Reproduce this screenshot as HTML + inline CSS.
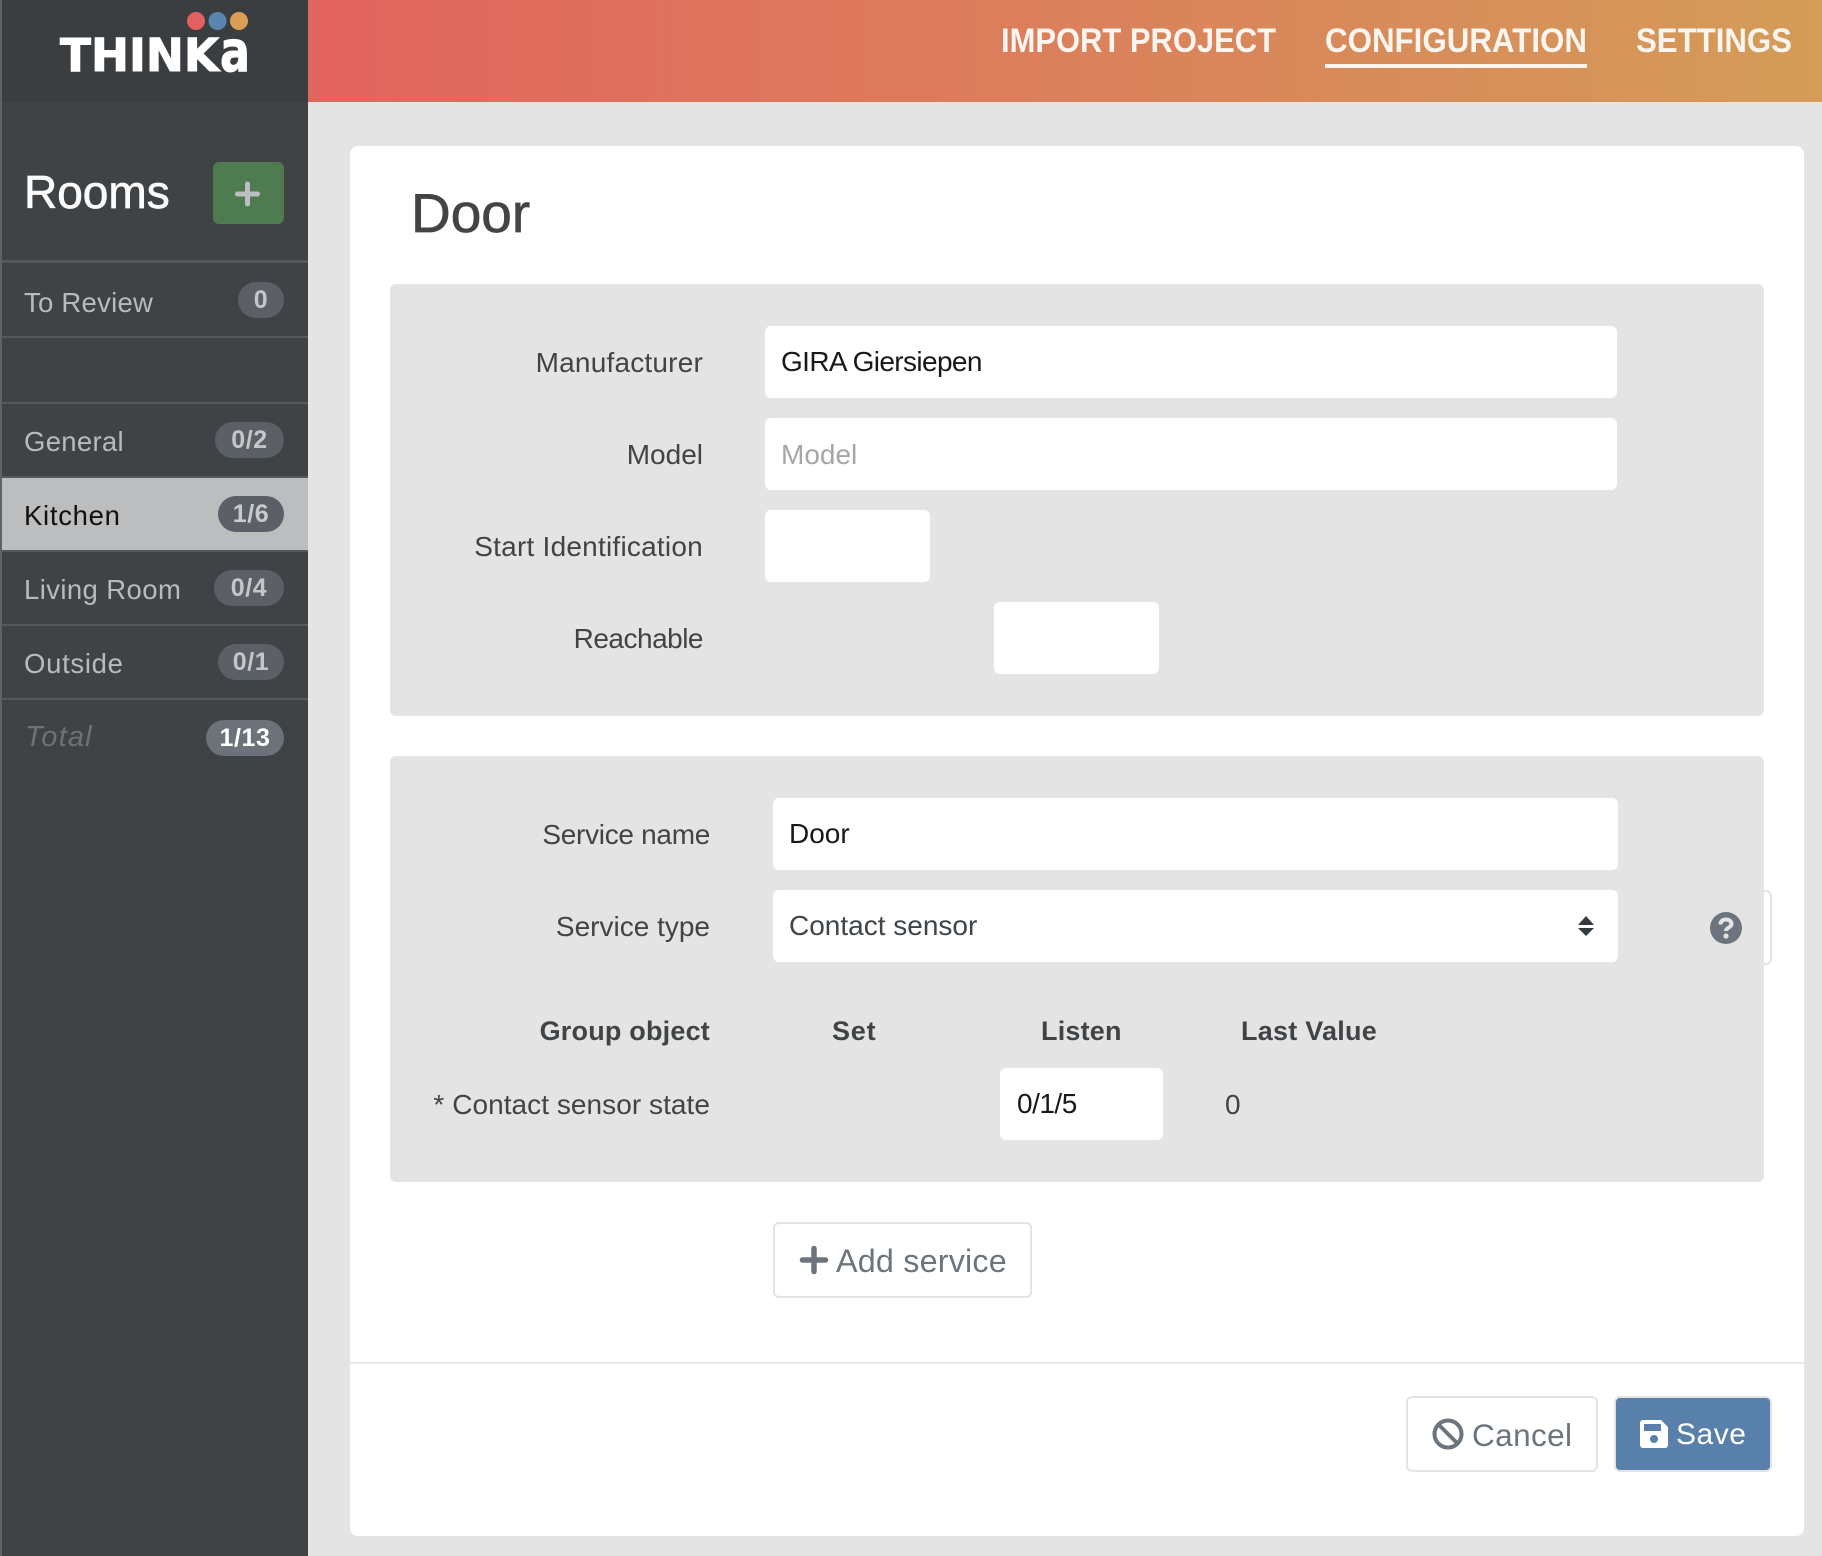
<!DOCTYPE html>
<html lang="en"><head><meta charset="utf-8"><title>Thinka</title>
<style>
html,body{margin:0;padding:0;width:1822px;height:1556px;overflow:hidden;background:#e4e4e4;font-family:"Liberation Sans",Arial,sans-serif}
.a{position:absolute}
.t{position:absolute;line-height:0;white-space:nowrap;font-size:28px;color:#414446}
.r{text-align:right;width:400px;left:310px}
.i{position:absolute;background:#fff;border-radius:6px;height:72px}
.side{color:#b9babb;left:24px;font-size:27.5px}
.b{position:absolute;height:36px;border-radius:18px;background:#5b6067;color:#c4c6c8;font-weight:bold;font-size:25px;line-height:36px;text-align:center;letter-spacing:.6px}
.hr{position:absolute;left:2px;width:306px;height:2px;background:#55585c}
.th{font-weight:bold;font-size:27px}
</style></head><body>
<!-- sidebar -->
<div class="a" style="left:0;top:0;width:308px;height:1556px;background:#3f4346"></div>
<div class="a" style="left:0;top:0;width:308px;height:102px;background:#3a3e41"></div>
<div class="a" style="left:0;top:0;width:2px;height:1556px;background:#5f6366"></div>
<!-- header -->
<div class="a" style="left:308px;top:0;width:1514px;height:102px;background:linear-gradient(90deg,#e2645f 0%,#d49c58 100%)"></div>
<svg class="a" style="left:0;top:0" width="1822" height="102">
<circle cx="196" cy="21" r="9" fill="#e26160"/><circle cx="217.500" cy="21" r="9" fill="#5a85b0"/><circle cx="239" cy="21" r="9" fill="#dc9e55"/>
<text x="60" y="71" font-family="DejaVu Sans" font-weight="bold" font-size="45" fill="#fff" stroke="#fff" stroke-width="1" textLength="159" lengthAdjust="spacingAndGlyphs">THINK</text>
<text x="220" y="71" font-family="DejaVu Sans" font-weight="bold" font-size="57" fill="#fff" stroke="#fff" stroke-width="1" textLength="30" lengthAdjust="spacingAndGlyphs">a</text>
<g font-family="Liberation Sans" font-weight="bold" font-size="34.500" fill="#fbf5f0">
<text x="1001" y="52" textLength="275" lengthAdjust="spacingAndGlyphs">IMPORT PROJECT</text>
<text x="1325" y="52" textLength="262" lengthAdjust="spacingAndGlyphs">CONFIGURATION</text>
<text x="1636" y="52" textLength="156" lengthAdjust="spacingAndGlyphs">SETTINGS</text>
</g>
<rect x="1325" y="64" width="262" height="4" fill="#fbf5f0"/>
</svg>
<!-- sidebar content -->
<div class="t" style="left:24px;top:192px;font-size:46px;color:#fbfbfb;-webkit-text-stroke:.7px #fbfbfb">Rooms</div>
<div class="a" style="left:213px;top:162px;width:71px;height:62px;border-radius:6px;background:#4e7b4f"></div>
<svg class="a" style="left:213px;top:162px" width="71" height="62"><path d="M24.500 32H44.500M34.500 22V42" stroke="#bcbfc1" stroke-width="5" stroke-linecap="round" fill="none"/></svg>
<div class="hr" style="top:260px;height:3px"></div>
<div class="hr" style="top:336px"></div>
<div class="hr" style="top:402px"></div>
<div class="hr" style="top:476px"></div>
<div class="a" style="left:2px;top:478px;width:306px;height:72px;background:#bcbdbf"></div>
<div class="hr" style="top:550px"></div>
<div class="hr" style="top:624px"></div>
<div class="hr" style="top:698px"></div>
<div class="t side" style="top:302.500px;letter-spacing:.25px">To Review</div>
<div class="b" style="left:238px;top:282px;width:46px">0</div>
<div class="t side" style="top:442px;letter-spacing:.3px">General</div>
<div class="b" style="left:215px;top:422px;width:69px">0/2</div>
<div class="t side" style="top:516px;color:#111;letter-spacing:.7px">Kitchen</div>
<div class="b" style="left:218px;top:496px;width:66px;color:#c8cacc">1/6</div>
<div class="t side" style="top:590px;letter-spacing:.4px">Living Room</div>
<div class="b" style="left:214px;top:570px;width:70px">0/4</div>
<div class="t side" style="top:664px;letter-spacing:.7px">Outside</div>
<div class="b" style="left:218px;top:644px;width:66px">0/1</div>
<div class="t side" style="top:737px;color:#6c7278;font-style:italic;font-size:29px;letter-spacing:1.200px;left:25px">Total</div>
<div class="b" style="left:206px;top:720px;width:78px;background:#6b7279;color:#fff;line-height:37px">1/13</div>
<!-- card -->
<div class="a" style="left:350px;top:146px;width:1454px;height:1390px;background:#fff;border-radius:8px"></div>
<div class="t" style="left:411px;top:213px;font-size:55px;color:#444;-webkit-text-stroke:.7px #444">Door</div>
<!-- panel 1 -->
<div class="a" style="left:390px;top:284px;width:1374px;height:432px;background:#e4e4e4;border-radius:6px"></div>
<div class="t r" style="left:303px;top:363px;letter-spacing:.2px">Manufacturer</div>
<div class="t r" style="left:303px;top:455px">Model</div>
<div class="t r" style="left:303px;top:547px;letter-spacing:.23px">Start Identification</div>
<div class="t r" style="left:303px;top:639px;letter-spacing:-.5px">Reachable</div>
<div class="i" style="left:765px;top:326px;width:852px"></div>
<div class="t" style="left:781px;top:362px;color:#16181a;letter-spacing:-.62px">GIRA Giersiepen</div>
<div class="i" style="left:765px;top:418px;width:852px"></div>
<div class="t" style="left:781px;top:455px;color:#a6a6a6">Model</div>
<div class="i" style="left:765px;top:510px;width:165px"></div>
<div class="i" style="left:994px;top:602px;width:165px"></div>
<!-- panel 2 -->
<div class="a" style="left:1760px;top:890px;width:8px;height:71px;border:2px solid #e4e4e4;border-radius:0 6px 6px 0"></div>
<div class="a" style="left:390px;top:756px;width:1374px;height:426px;background:#e4e4e4;border-radius:6px"></div>
<div class="t r" style="top:835px;letter-spacing:-.3px">Service name</div>
<div class="t r" style="top:927px">Service type</div>
<div class="i" style="left:773px;top:798px;width:845px"></div>
<div class="t" style="left:789px;top:834px;color:#16181a">Door</div>
<div class="i" style="left:773px;top:890px;width:845px"></div>
<div class="t" style="left:789px;top:926px;color:#3f4448">Contact sensor</div>
<svg class="a" style="left:1570px;top:910px" width="32" height="32"><path d="M16 6L24 15H8ZM16 26L24 18H8Z" fill="#343a40"/></svg>
<svg class="a" style="left:1708px;top:910px" width="36" height="36"><circle cx="18" cy="18" r="16" fill="#6c757d"/><path d="M12.500 14.500C12.500 11 15 9.500 18 9.500C21 9.500 23.500 11.300 23.500 14C23.500 17.500 18 17.500 18 21" fill="none" stroke="#e4e4e4" stroke-width="4"/><circle cx="18" cy="26" r="2.600" fill="#e4e4e4"/></svg>
<div class="t th r" style="top:1030.500px;letter-spacing:.2px">Group object</div>
<div class="t th" style="left:832px;top:1030.500px;letter-spacing:.8px">Set</div>
<div class="t th" style="left:1041px;top:1030.500px;letter-spacing:.2px">Listen</div>
<div class="t th" style="left:1241px;top:1030.500px;letter-spacing:.25px">Last Value</div>
<div class="t r" style="top:1105px;letter-spacing:.05px">* Contact sensor state</div>
<div class="i" style="left:1000px;top:1068px;width:163px"></div>
<div class="t" style="left:1017px;top:1104px;color:#16181a;letter-spacing:-.5px">0/1/5</div>
<div class="t" style="left:1225px;top:1105px">0</div>
<!-- add service -->
<div class="a" style="left:773px;top:1222px;width:255px;height:72px;border:2px solid #e4e4e4;border-radius:6px"></div>
<svg class="a" style="left:798px;top:1244px" width="32" height="32"><path d="M4.500 16H27.500M16 4.500V27.500" stroke="#6c757d" stroke-width="5.500" stroke-linecap="round" fill="none"/></svg>
<div class="t" style="left:836px;top:1261px;font-size:32.300px;color:#6c757d;letter-spacing:.2px">Add service</div>
<!-- footer -->
<div class="a" style="left:350px;top:1362px;width:1454px;height:2px;background:#e9e9e9"></div>
<div class="a" style="left:1406px;top:1396px;width:188px;height:72px;border:2px solid #e4e4e4;border-radius:6px"></div>
<svg class="a" style="left:1430px;top:1416px" width="36" height="36"><circle cx="18" cy="18" r="13.500" fill="none" stroke="#6c757d" stroke-width="4"/><path d="M8.500 8.500L27.500 27.500" stroke="#6c757d" stroke-width="4"/></svg>
<div class="t" style="left:1472px;top:1435px;font-size:31.500px;color:#6c757d;letter-spacing:.4px">Cancel</div>
<div class="a" style="left:1614px;top:1396px;width:154px;height:72px;border:2px solid #e4e4e4;border-radius:6px;background:#5880aa"></div>
<svg class="a" style="left:1640px;top:1420px" width="28" height="28"><path d="M3 0H21L28 7V25A3 3 0 0 1 25 28H3A3 3 0 0 1 0 25V3A3 3 0 0 1 3 0Z" fill="#fff"/><rect x="4" y="4" width="17" height="7" fill="#5880aa"/><circle cx="14" cy="19" r="4" fill="#5880aa"/></svg>
<div class="t" style="left:1676px;top:1435px;font-size:30px;color:#fff;letter-spacing:.5px">Save</div>
</body></html>
